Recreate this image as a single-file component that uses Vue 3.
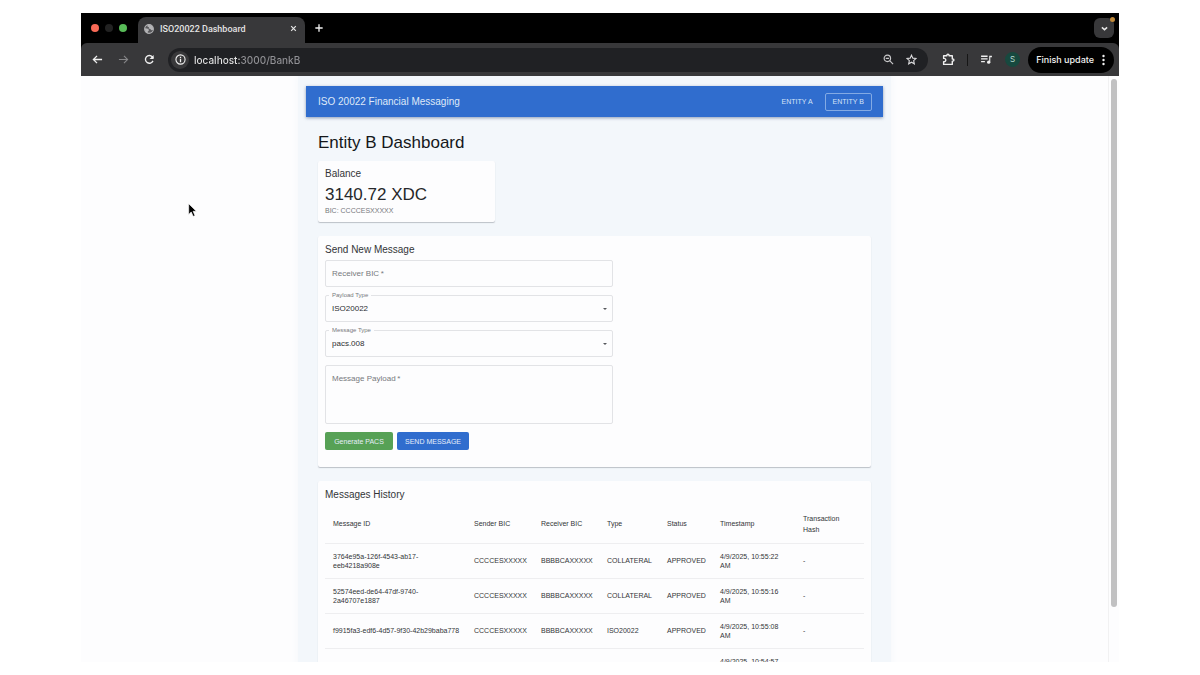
<template>
  <div class="desktop">
    <div class="browser">
      <div class="tab-strip">
        <div class="lights">
          <span class="light red"></span>
          <span class="light dark"></span>
          <span class="light green"></span>
        </div>
        <div class="tab">
          <svg class="globe" viewBox="0 0 24 24" aria-hidden="true">
            <circle cx="12" cy="12" r="10.5" stroke="#b4b4b6" stroke-width="2.6" fill="#58585b" />
            <path d="M2 10l6 1 4 3-1 3-2 1v5C5 21 2 17 2 10zM9 2l-1 4 4 2-1 3 4 1 3 3 4-1C23 7 18 1 9 2z" fill="#b4b4b6" />
          </svg>
          <span class="tab-title">ISO20022 Dashboard</span>
          <button class="icon-btn" aria-label="Close tab">
            <svg class="icon-small" viewBox="0 0 24 24"><path d="M4 4l16 16M20 4L4 20" stroke="#e6e6e6" stroke-width="4" fill="none" /></svg>
          </button>
        </div>
        <button class="icon-btn new-tab" aria-label="New tab">
          <svg class="icon-small plus" viewBox="0 0 24 24"><path d="M12 1v22M1 12h22" stroke="#f0f0f0" stroke-width="4" fill="none" /></svg>
        </button>
        <button class="icon-btn tab-search" aria-label="Search tabs">
          <svg class="icon-small" viewBox="0 0 24 24"><path d="M3 8l9 8 9-8" stroke="#e6e6e6" stroke-width="5" fill="none" /></svg>
          <span class="alert-dot"></span>
        </button>
      </div>

      <div class="toolbar">
        <div class="nav-buttons">
          <button class="icon-btn" aria-label="Back">
            <svg class="icon" viewBox="0 0 24 24"><path d="M22 12H3M11 4l-8 8 8 8" stroke="#f0f0f0" stroke-width="2.8" fill="none" /></svg>
          </button>
          <button class="icon-btn" aria-label="Forward">
            <svg class="icon" viewBox="0 0 24 24"><path d="M2 12h19M13 4l8 8-8 8" stroke="#858587" stroke-width="2.4" fill="none" /></svg>
          </button>
          <button class="icon-btn" aria-label="Reload">
            <svg class="icon" viewBox="0 0 24 24"><path d="M19.500 15A8.500 8.500 0 1 1 18 6l2 3" stroke="#f0f0f0" stroke-width="3" fill="none" /><path d="M21 2v9h-9z" fill="#f0f0f0" /></svg>
          </button>
        </div>
        <div class="omnibox">
          <button class="icon-btn site-info" aria-label="Site information">
            <svg class="icon" viewBox="0 0 24 24"><circle cx="12" cy="12" r="10" stroke="#f0f0f0" stroke-width="2.4" fill="none" /><path d="M12 11v7M12 6v3" stroke="#f0f0f0" stroke-width="2.8" /></svg>
          </button>
          <input v-model="url" class="url" type="text" aria-label="Address" />
          <button class="icon-btn" aria-label="Zoom">
            <svg class="icon" viewBox="0 0 24 24"><circle cx="9.500" cy="9.500" r="7" stroke="#c8c8ca" stroke-width="2.6" fill="none" /><path d="M15 15l7 7M6 9.500h7" stroke="#c8c8ca" stroke-width="2.6" /></svg>
          </button>
          <button class="icon-btn" aria-label="Bookmark">
            <svg class="icon" viewBox="0 0 24 24"><path d="M12 2.500l2.900 6.500 7.100.7-5.300 4.700 1.500 7L12 17.800l-6.200 3.600 1.500-7L2 9.700 9.100 9z" stroke="#d8d8da" stroke-width="2.400" fill="none" /></svg>
          </button>
        </div>
        <div class="extensions">
          <button class="icon-btn" aria-label="Extensions">
            <svg class="icon-large" viewBox="0 0 24 24"><path d="M3 5h6V4a2 2 0 0 1 4 0v1h6v6h1a2 2 0 0 1 0 4h-1v6H3v-5h1a3 3 0 0 0 0-6H3z" stroke="#f0f0f0" stroke-width="2.600" stroke-linejoin="round" fill="none" /></svg>
          </button>
          <span class="divider"></span>
          <button class="icon-btn" aria-label="Media">
            <svg class="icon-large" viewBox="0 0 24 24"><path d="M2 6h12M2 11h12M2 16h7" stroke="#f0f0f0" stroke-width="2.400" /><path d="M17 17V5h5v3h-3v9" fill="#f0f0f0" /><circle cx="16" cy="17" r="3" fill="#f0f0f0" /></svg>
          </button>
          <button class="avatar" aria-label="Profile">S</button>
        </div>
        <button class="update">
          Finish update
          <svg class="dots" viewBox="0 0 6 24" aria-hidden="true"><circle cx="3" cy="4" r="2.400" /><circle cx="3" cy="12" r="2.400" /><circle cx="3" cy="20" r="2.400" /></svg>
        </button>
      </div>

      <div class="viewport">
        <div class="page">
          <div class="app">
            <header class="app-bar">
              <span class="brand">ISO 20022 Financial Messaging</span>
              <nav class="links">
                <a href="#entity-a">ENTITY A</a>
                <a href="#entity-b" class="active">ENTITY B</a>
              </nav>
            </header>

            <main class="content">
              <h1>Entity B Dashboard</h1>

              <section class="card balance">
                <h2>Balance</h2>
                <p class="amount">3140.72 XDC</p>
                <p class="bic">BIC: CCCCESXXXXX</p>
              </section>

              <section class="card send">
                <h2>Send New Message</h2>
                <form @submit.prevent>
                  <div class="field">
                    <input id="receiver" v-model="form.receiver" type="text" required />
                    <label for="receiver">Receiver BIC&thinsp;*</label>
                  </div>
                  <div class="field">
                    <select id="payload-type" v-model="form.payloadType">
                      <option>ISO20022</option>
                    </select>
                    <label for="payload-type" class="floating">Payload Type</label>
                    <span class="caret"></span>
                  </div>
                  <div class="field">
                    <select id="message-type" v-model="form.messageType">
                      <option>pacs.008</option>
                    </select>
                    <label for="message-type" class="floating">Message Type</label>
                    <span class="caret"></span>
                  </div>
                  <div class="field">
                    <textarea id="payload" v-model="form.payload" required></textarea>
                    <label for="payload">Message Payload&thinsp;*</label>
                  </div>
                  <div class="actions">
                    <button type="button" class="btn-generate">Generate PACS</button>
                    <button type="submit" class="btn-send">SEND MESSAGE</button>
                  </div>
                </form>
              </section>

              <section class="card history">
                <h2>Messages History</h2>
                <table>
                  <colgroup>
                    <col class="col-id" />
                    <col class="col-sender" />
                    <col class="col-receiver" />
                    <col class="col-type" />
                    <col class="col-status" />
                    <col class="col-time" />
                    <col />
                  </colgroup>
                  <thead>
                    <tr>
                      <th v-for="title in columns" :key="title">{{ title }}</th>
                    </tr>
                  </thead>
                  <tbody>
                    <tr v-for="row in messages" :key="row.id">
                      <td>{{ row.id }}</td>
                      <td>{{ row.sender }}</td>
                      <td>{{ row.receiver }}</td>
                      <td>{{ row.type }}</td>
                      <td>{{ row.status }}</td>
                      <td>{{ row.time }}</td>
                      <td>{{ row.hash }}</td>
                    </tr>
                  </tbody>
                </table>
              </section>
            </main>
          </div>
        </div>
        <div class="scrollbar"><div class="thumb"></div></div>
        <svg class="cursor" viewBox="0 0 14 22" aria-hidden="true"><path d="M1 1v17l4-4 3 7 3-1-3-7h5z" fill="#000" stroke="#fff" stroke-width="1" /></svg>
      </div>
    </div>
  </div>
</template>

<script setup>
import { ref } from 'vue';

const url = ref('localhost:3000/BankB');

const form = ref({
  receiver: '',
  payloadType: 'ISO20022',
  messageType: 'pacs.008',
  payload: ''
});

const columns = ['Message ID', 'Sender BIC', 'Receiver BIC', 'Type', 'Status', 'Timestamp', 'Transaction\nHash'];

const messages = ref([
  { id: '3764e95a-126f-4543-ab17-\neeb4218a908e', sender: 'CCCCESXXXXX', receiver: 'BBBBCAXXXXX', type: 'COLLATERAL', status: 'APPROVED', time: '4/9/2025, 10:55:22\nAM', hash: '-' },
  { id: '52574eed-de64-47df-9740-\n2a46707e1887', sender: 'CCCCESXXXXX', receiver: 'BBBBCAXXXXX', type: 'COLLATERAL', status: 'APPROVED', time: '4/9/2025, 10:55:16\nAM', hash: '-' },
  { id: 'f9915fa3-edf6-4d57-9f30-42b29baba778', sender: 'CCCCESXXXXX', receiver: 'BBBBCAXXXXX', type: 'ISO20022', status: 'APPROVED', time: '4/9/2025, 10:55:08\nAM', hash: '-' },
  { id: '', sender: '', receiver: '', type: '', status: '', time: '4/9/2025, 10:54:57\nAM', hash: '' }
]);
</script>

<style>
body { margin: 0; background: #fff; }
</style>

<style scoped>
* { box-sizing: border-box; }
button, input, select, textarea { font-family: inherit; margin: 0; }
.desktop { height: 100vh; padding: 13px 81px; font-family: "Liberation Sans", Arial, sans-serif; }
.browser { height: 100%; display: flex; flex-direction: column; background: #000; overflow: hidden; }

/* tabs */
.tab-strip { height: 30px; flex: none; display: flex; align-items: center; padding: 0 5px 0 10px; font-family: Inter, sans-serif; }
.lights { display: flex; gap: 6px; width: 47px; }
.light { width: 8px; height: 8px; border-radius: 50%; }
.red { background: #f96a57; }
.dark { background: #222; }
.green { background: #58bb58; }
.tab { align-self: flex-end; height: 26px; width: 167px; padding: 0 8px 3px 6px; display: flex; align-items: center; gap: 6px; background: #38383a; border-radius: 8px 8px 0 0; }
.globe { width: 10px; height: 10px; }
.tab-title { flex: 1; color: #e3e3e3; font-family: Roboto, sans-serif; font-size: 9px; font-weight: 500; line-height: 12px; white-space: nowrap; }
.icon-btn { display: flex; align-items: center; justify-content: center; padding: 0; border: none; background: none; cursor: pointer; }
.icon { width: 11px; height: 11px; }
.icon-large { width: 13px; height: 13px; }
.icon-small { width: 7px; height: 7px; }
.plus { width: 8px; height: 8px; }
.new-tab { margin-left: 10px; }
.tab-search { position: relative; margin-left: auto; width: 20px; height: 20px; border-radius: 6px; background: #38383a; }
.alert-dot { position: absolute; top: -1px; right: -1px; width: 5px; height: 5px; border-radius: 50%; background: #c18a3a; }

/* toolbar */
.toolbar { height: 33px; flex: none; display: flex; align-items: center; padding: 0 5px 0 11px; background: #38383a; border-radius: 6px 6px 0 0; font-family: Inter, sans-serif; }
.nav-buttons { display: flex; gap: 15px; width: 76px; }
.omnibox { flex: 1; height: 24px; display: flex; align-items: center; gap: 12px; padding: 0 11px 0 3px; border-radius: 12px; background: #202124; }
.site-info { width: 18px; height: 18px; border-radius: 50%; background: #38383a; }
.url { flex: 1; min-width: 0; margin-left: -7px; padding: 0; border: none; outline: none; font-size: 10px; font-weight: 500; line-height: 14px; color: transparent; background: linear-gradient(to right, #e8e8e8 47px, #929296 47px); background-clip: text; }
.extensions { display: flex; align-items: center; gap: 12px; padding: 0 8px 0 14px; }
.divider { width: 1px; height: 12px; background: #161616; }
.avatar { width: 15px; height: 15px; padding: 0; border: none; border-radius: 50%; background: #17493f; color: #b9d8cf; font-size: 8px; line-height: 15px; }
.update { height: 26px; display: flex; align-items: center; gap: 8px; padding: 0 9px 0 8px; border: none; border-radius: 13px; background: #000; color: #f2f2f2; font-size: 9px; font-weight: 500; white-space: nowrap; }
.dots { width: 3px; height: 12px; fill: #f2f2f2; }

/* page */
.viewport { position: relative; flex: 1; min-height: 0; display: flex; background: #fdfdfe; }
.page { flex: 1; min-width: 0; overflow: hidden; padding: 0 16px; }
.app { max-width: 593px; margin: 0 auto; padding: 10px 8px 0; background: #f3f7fb; box-shadow: 0 0 8px #f3f7fb; }
.app-bar { height: 31px; display: flex; align-items: center; justify-content: space-between; padding: 0 11px 0 12px; background: #306dce; box-shadow: 0 1px 3px rgba(40, 70, 120, 0.5); }
.brand { color: #dfe9f8; font-size: 10px; line-height: 14px; }
.links { display: flex; gap: 4px; }
.links a { padding: 0 7px; border: 1px solid transparent; border-radius: 2px; color: #d5e3f7; font-size: 7px; line-height: 16px; text-decoration: none; }
.links .active { border-color: #83aae4; }
.content { padding: 16px 12px 0; }
h1 { margin: 0 0 8px; color: #15171a; font-size: 17px; font-weight: 400; line-height: 20px; }
h2 { margin: 0; color: #333538; font-size: 10px; font-weight: 400; line-height: 14px; }
.card { padding: 7px; border-radius: 2px; background: #fdfdfe; box-shadow: 0 1px 1px rgba(60, 65, 80, 0.3); }
.balance { width: 177px; height: 61px; padding-top: 6px; }
.amount { margin: 3px 0 0; color: #26282b; font-size: 17px; line-height: 22px; }
.bic { margin: 0; color: #77797d; font-size: 7px; line-height: 9px; }
.send { margin-top: 14px; padding-bottom: 17px; }
form { width: 53.5%; margin-top: 3px; display: flex; flex-direction: column; gap: 8px; }
.field { position: relative; display: flex; }
.field input, .field select, .field textarea { width: 100%; height: 27px; padding: 0 6px; border: 1px solid #e2e3e6; border-radius: 2px; background: transparent; color: #2d2f32; font-size: 8px; outline: none; appearance: none; resize: none; }
.field textarea { height: 59px; padding-top: 8px; }
.field label { position: absolute; left: 7px; top: 8px; color: #77797d; font-size: 8px; line-height: 11px; pointer-events: none; }
.field .floating { left: 4px; top: -4px; padding: 0 3px; background: #fdfdfe; font-size: 6px; line-height: 8px; }
.caret { position: absolute; right: 6px; top: 13px; border: 2px solid transparent; border-top-color: #55575b; border-bottom: none; pointer-events: none; }
.actions { display: flex; gap: 4px; }
.actions button { height: 18px; padding: 0; border: none; border-radius: 2px; color: #e6eefa; font-size: 7px; white-space: nowrap; }
.actions .btn-generate { width: 68px; background: #57a156; }
.actions .btn-send { width: 72px; background: #306dce; }
.history { margin-top: 14px; }

/* messages */
table { width: 100%; margin-top: 3px; border-collapse: collapse; table-layout: fixed; color: #333538; font-size: 7px; line-height: 9px; }
.col-id { width: 141px; }
.col-sender { width: 67px; }
.col-receiver { width: 66px; }
.col-type { width: 60px; }
.col-status { width: 53px; }
.col-time { width: 83px; }
th, td { height: 35px; padding: 0 8px; border-bottom: 1px solid #eeeef0; text-align: left; vertical-align: middle; white-space: pre; }
th { height: 38px; font-weight: 400; line-height: 11px; }

.scrollbar { width: 11px; flex: none; padding: 3px 2px; border-left: 1px solid #f1f1f2; }
.thumb { width: 6px; height: 91%; border-radius: 3px; background: #c1c1c2; }
.cursor { position: absolute; left: 107px; top: 127px; width: 9px; height: 14px; }
</style>
